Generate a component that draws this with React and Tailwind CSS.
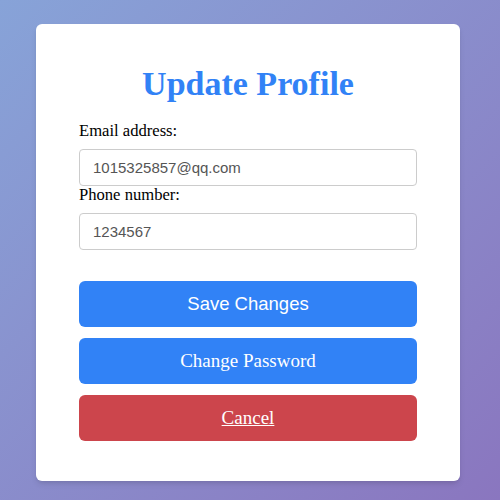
import React, { useState } from "react";

const App = () => {
    const [profile, setProfile] = useState({
        email: "1015325857@qq.com",
        phone: "1234567",
    });

    const handleEdit = (event) => {
        setProfile({ ...profile, [event.target.name]: event.target.value });
    };

    return (
        <div className="w-[500px] h-[500px] bg-gradient-to-br from-[#87a3d8] to-[#8a76bf] pt-[24px]">
            <div className="ml-[36px] w-[424px] h-[457px] bg-white rounded-[6px] shadow-md px-[43px] pt-[41px] font-['Liberation_Serif',serif]">
                <h1 className="text-center text-[34px] leading-[37px] font-bold text-[#3182f6]">Update Profile</h1>

                <label className="block mt-[20px] text-[16.6px] leading-[18px] text-black">Email address:</label>
                <input
                    className="block mt-[9px] w-full h-[37px] border border-[#cccccc] rounded-[4px] px-[13px] text-[15px] text-[#555555] font-['Liberation_Sans',sans-serif] outline-none"
                    type="email"
                    name="email"
                    value={profile.email}
                    onChange={handleEdit}
                />
                <label className="block text-[16.6px] leading-[18px] text-black">Phone number:</label>
                <input
                    className="block mt-[9px] w-full h-[37px] border border-[#cccccc] rounded-[4px] px-[13px] text-[15px] text-[#555555] font-['Liberation_Sans',sans-serif] outline-none"
                    type="text"
                    name="phone"
                    value={profile.phone}
                    onChange={handleEdit}
                />

                <button className="block mt-[31px] w-full h-[46px] rounded-[6px] bg-[#3182f6] text-white text-[18.5px] font-['Liberation_Sans',sans-serif]">
                    Save Changes
                </button>
                <button className="block mt-[11px] w-full h-[46px] rounded-[6px] bg-[#3182f6] text-white text-[19px]">
                    Change Password
                </button>
                <button className="block mt-[11px] w-full h-[46px] rounded-[6px] bg-[#cc454c] text-white text-[19px] underline">
                    Cancel
                </button>
            </div>
        </div>
    );
};

export default App;
